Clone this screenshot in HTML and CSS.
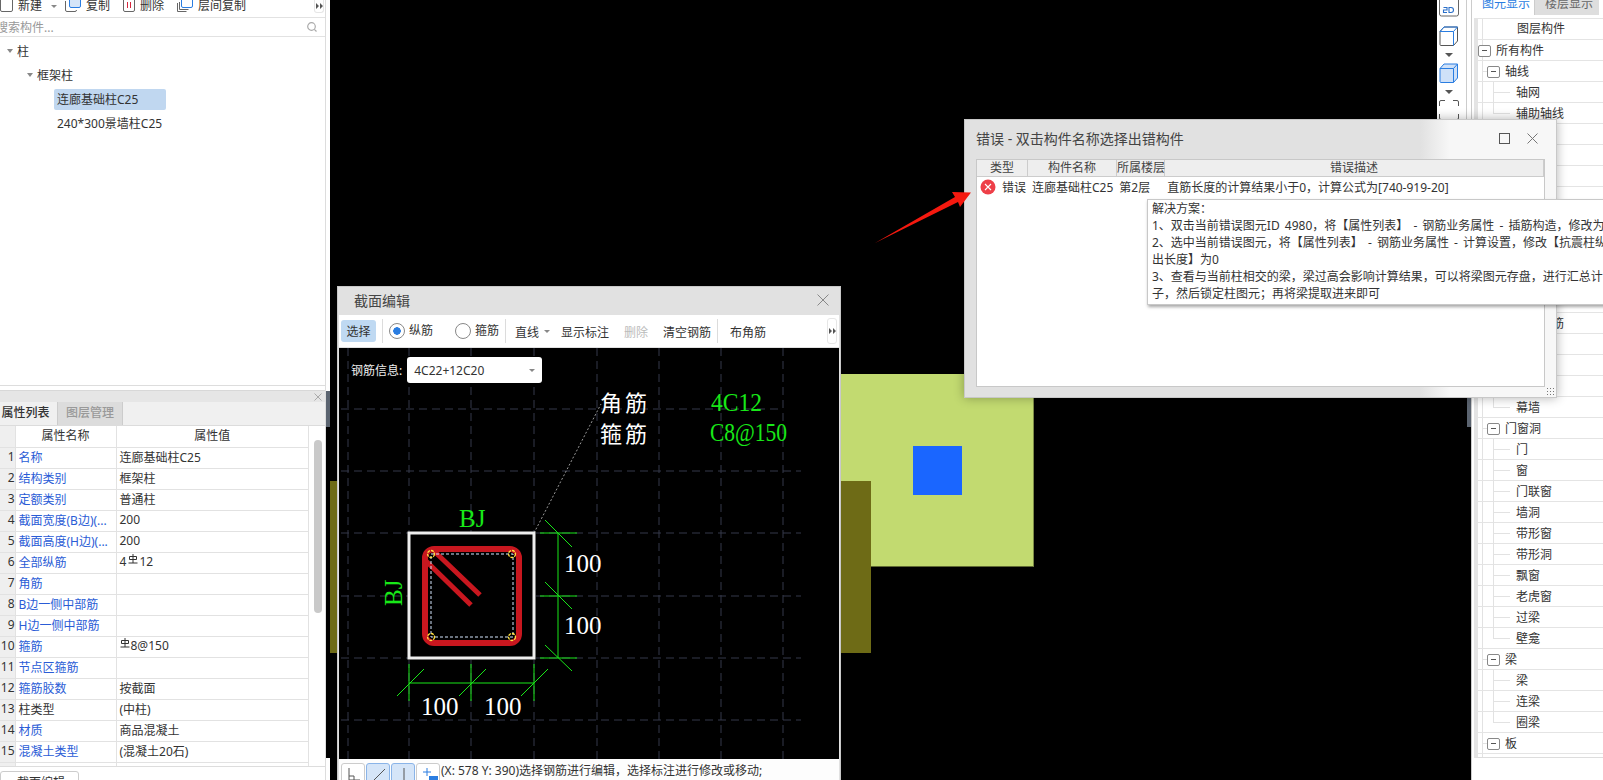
FILE: index.html
```html
<!DOCTYPE html>
<html lang="zh-CN">
<head>
  <meta charset="UTF-8" />
  <title>截面编辑</title>
  <link rel="stylesheet" href="styles.css">
</head>
<body>
  <div class="left-panel">
    <div class="left-content">
      <div class="top-toolbar">
        <span class="tool-item"><svg class="tool-icon" width="13" height="12" viewBox="0 0 13 12"><path d="M.5 0v10a1.5 1.5 0 0 0 1.5 1.5h9a1.5 1.5 0 0 0 1.5-1.5V0" fill="none" stroke="#666"/></svg>新建<i class="caret-small"></i></span>
        <span class="tool-item"><svg class="tool-icon" width="16" height="12" viewBox="0 0 16 12"><path d="M.5 1v9a1.5 1.5 0 0 0 1.5 1.5h8a1.5 1.5 0 0 0 1.5-1.5" fill="none" stroke="#666"/><path d="M4.5 0v6a1.5 1.5 0 0 0 1.5 1.5h8A1.5 1.5 0 0 0 15.500 6V0" fill="#d5e5f8" stroke="#2a7de1"/></svg>复制</span>
        <span class="tool-item"><svg class="tool-icon" width="12" height="12" viewBox="0 0 12 12"><path d="M.5 0v10a1.5 1.5 0 0 0 1.500 1.500h8a1.500 1.500 0 0 0 1.500-1.500V0" fill="none" stroke="#666"/><path d="M4.500 2v6M7.500 2v6" stroke="#d7263d"/></svg>删除</span>
        <span class="tool-item"><svg class="tool-icon" width="16" height="12" viewBox="0 0 16 12"><path d="M.5 3v8.500h9M2.500 2v7.500h9" fill="none" stroke="#666"/><path d="M4.500 0v6a1.500 1.500 0 0 0 1.500 1.500h8a1.500 1.500 0 0 0 1.500-1.500V0" fill="#fff" stroke="#2a7de1"/></svg>层间复制</span>
        <span class="more-btn"><svg width="7" height="6" viewBox="0 0 7 6"><path d="M0 0l3 3-3 3zM4 0l3 3-3 3z" fill="#555"/></svg></span>
      </div>
      <div class="search-row">
        <span class="search-text">搜索构件...</span>
        <svg width="10" height="10" viewBox="0 0 10 10"><circle cx="4.500" cy="4.500" r="3.800" fill="none" stroke="#aaa" stroke-width="1.200"/><path d="M7.300 7.300L9.500 9.500" stroke="#aaa" stroke-width="1.200"/></svg>
      </div>
      <div class="tree">
        <div class="tree-row"><i class="caret-tree"></i>柱</div>
        <div class="tree-row tree-group"><i class="caret-tree"></i>框架柱</div>
        <div class="tree-row tree-leaf"><span class="tree-label tree-selected">连廊基础柱C25</span></div>
        <div class="tree-row tree-leaf"><span class="tree-label">240*300景墙柱C25</span></div>
      </div>
      <div class="prop-panel">
        <div class="prop-titlebar"><svg width="8" height="8" viewBox="0 0 8 8"><path d="M.5.5l7 7M7.500.5l-7 7" stroke="#aaa"/></svg></div>
        <div class="prop-tabs">
          <span class="prop-tab prop-tab-active">属性列表</span>
          <span class="prop-tab">图层管理</span>
        </div>
        <div class="prop-body">
          <table class="prop-table">
            <tr><th class="col-num"></th><th class="col-name">属性名称</th><th>属性值</th></tr>
            <tr><td class="col-num">1</td><td class="blue">名称</td><td>连廊基础柱C25</td></tr>
            <tr><td class="col-num">2</td><td class="blue">结构类别</td><td>框架柱</td></tr>
            <tr><td class="col-num">3</td><td class="blue">定额类别</td><td>普通柱</td></tr>
            <tr><td class="col-num">4</td><td class="blue">截面宽度(B边)(...</td><td>200</td></tr>
            <tr><td class="col-num">5</td><td class="blue">截面高度(H边)(...</td><td>200</td></tr>
            <tr><td class="col-num">6</td><td class="blue">全部纵筋</td><td>4<svg class="steel" width="10" height="10" viewBox="0 0 10 10"><path d="M5 0v9M1.500 2.500h7v3h-7zM.5 9h9" fill="none" stroke="#333"/></svg>12</td></tr>
            <tr><td class="col-num">7</td><td class="blue">角筋</td><td></td></tr>
            <tr><td class="col-num">8</td><td class="blue">B边一侧中部筋</td><td></td></tr>
            <tr><td class="col-num">9</td><td class="blue">H边一侧中部筋</td><td></td></tr>
            <tr><td class="col-num">10</td><td class="blue">箍筋</td><td><svg class="steel steel-first" width="10" height="10" viewBox="0 0 10 10"><path d="M5 0v9M1.500 2.500h7v3h-7zM.5 9h9" fill="none" stroke="#333"/></svg>8@150</td></tr>
            <tr><td class="col-num">11</td><td class="blue">节点区箍筋</td><td></td></tr>
            <tr><td class="col-num">12</td><td class="blue">箍筋胶数</td><td>按截面</td></tr>
            <tr><td class="col-num">13</td><td>柱类型</td><td>(中柱)</td></tr>
            <tr><td class="col-num">14</td><td class="blue">材质</td><td>商品混凝土</td></tr>
            <tr><td class="col-num">15</td><td class="blue">混凝土类型</td><td>(混凝土20石)</td></tr>
            <tr class="row-cut"><td class="col-num"></td><td></td><td></td></tr>
          </table>
          <div class="prop-scroll"><div class="prop-thumb"></div></div>
        </div>
        <div class="prop-footer"><span class="footer-btn">截面编辑</span></div>
      </div>
    </div>
    <div class="left-splitter"></div>
  </div>

  <div class="stage">
    <div class="shape-green"></div>
    <div class="shape-blue"></div>
    <div class="shape-olive"></div>
    <div class="right-splitter"></div>

    <div class="icon-rail">
      <svg class="rail-icon" width="20" height="17" viewBox="0 0 20 17"><path d="M.5 0v14a2 2 0 0 0 2 2h15a2 2 0 0 0 2-2V0" fill="none" stroke="#666"/><path d="M4.500 7.500h3.500v2.500h-3.500v2.500h3.500M10 7.500v5h2a2.500 2.500 0 0 0 0-5z" fill="none" stroke="#2a6fc9" stroke-width="1.100"/></svg>
      <svg class="rail-cube" width="20" height="20" viewBox="0 0 20 20"><path d="M1 5.500L5 1h13.500v14l-4 4.500H2a1 1 0 0 1-1-1z" fill="#fff" stroke="#555"/><path d="M1 5.500h13.500V19.500M14.500 5.500L18.500 1" fill="none" stroke="#2a7de1"/><path d="M1 5.500L5 1h13.500" fill="none" stroke="#2a7de1"/></svg>
      <i class="rail-caret"></i>
      <svg class="rail-cube" width="20" height="20" viewBox="0 0 20 20"><path d="M1 5.500L5 1h13.500v14l-4 4.500H2a1 1 0 0 1-1-1z" fill="#cfe1f8" stroke="#2a7de1"/><path d="M1 5.500h13.500V19.500M14.500 5.500L18.500 1" fill="none" stroke="#2a7de1"/></svg>
      <i class="rail-caret"></i>
      <svg class="rail-cube" width="20" height="20" viewBox="0 0 20 20"><path d="M.5 6V2A1.500 1.500 0 0 1 2 .5h4M14 .5h4A1.500 1.500 0 0 1 19.500 2v4M.5 14v4A1.500 1.500 0 0 0 2 19.500h4M14 19.500h4a1.500 1.500 0 0 0 1.500-1.500v-4" fill="none" stroke="#555"/></svg>
    </div>

    <svg class="red-arrow" width="110" height="60" viewBox="870 188 110 60"><polygon points="875,243 955,197 952,192 971,192.500 960,207 958,202" fill="#f5190f"/></svg>

    <!-- 截面编辑 window -->
    <div class="section-window">
      <div class="section-title">
        <span>截面编辑</span>
        <svg width="12" height="12" viewBox="0 0 12 12"><path d="M.5.5l11 11M11.500.5l-11 11" stroke="#888"/></svg>
      </div>
      <div class="section-toolbar">
        <span class="sec-btn sec-btn-on">选择</span>
        <i class="sec-sep"></i>
        <span class="sec-radio sec-radio-on">纵筋</span>
        <span class="sec-radio sec-radio-gap">箍筋</span>
        <i class="sec-sep"></i>
        <span class="sec-line">直线<i class="caret-small"></i></span>
        <span class="sec-text">显示标注</span>
        <span class="sec-text sec-disabled">删除</span>
        <span class="sec-text">清空钢筋</span>
        <i class="sec-sep"></i>
        <span class="sec-text sec-last">布角筋</span>
        <span class="more-btn sec-more"><svg width="7" height="6" viewBox="0 0 7 6"><path d="M0 0l3 3-3 3zM4 0l3 3-3 3z" fill="#555"/></svg></span>
      </div>
      <div class="section-canvas">
        <svg class="section-drawing" width="501" height="411" viewBox="338 347 501 411">
          <g stroke="#34384a" stroke-dasharray="8 5" fill="none">
            <path d="M347 347V758M408 347V758M470 347V758M533 347V758M596 347V758M658 347V758M720 347V758M782 347V758"/>
            <path d="M340 408H782M340 470H800M340 532H800M340 595H800M340 657H800M340 719H800"/>
          </g>
          <path d="M533 532L600 403" stroke="#999" stroke-dasharray="2 2"/>
          <rect x="408" y="532" width="125" height="125" fill="#000" stroke="#eee" stroke-width="3"/>
          <rect x="424" y="548" width="94" height="94" rx="9" fill="none" stroke="#c8171f" stroke-width="6"/>
          <path d="M433 550L479 594M425 560L470 604" stroke="#c8171f" stroke-width="5"/>
          <rect x="430" y="553" width="82" height="83" fill="none" stroke="#d4e6ff" stroke-dasharray="3 2"/>
          <g fill="none" stroke="#ffe040" stroke-width="1.300" stroke-dasharray="3 1">
            <circle cx="430" cy="553" r="3.500"/><circle cx="511" cy="553" r="3.500"/><circle cx="430" cy="636" r="3.500"/><circle cx="511" cy="636" r="3.500"/>
          </g>
          <g stroke="#18e818" fill="none">
            <path d="M557 532V657M539 532H576M539 595H576M539 657H576M544 519L571 546M544 581L571 608M544 644L571 670"/>
            <path d="M408 682H533M408 663V700M470 663V700M533 663V700M396 695L423 668M458 695L485 668M520 695L547 668"/>
          </g>
          <g class="cad-num">
            <text x="563" y="571">100</text>
            <text x="563" y="633">100</text>
            <text x="420" y="714">100</text>
            <text x="483" y="714">100</text>
          </g>
          <g class="cad-green">
            <text x="458" y="526">BJ</text>
            <text transform="translate(401 605) rotate(-90)">BJ</text>
            <text x="710" y="410" textLength="51" lengthAdjust="spacingAndGlyphs">4C12</text>
            <text x="709" y="440" textLength="77" lengthAdjust="spacingAndGlyphs">C8@150</text>
          </g>
          <g class="cad-label">
            <text x="599" y="410">角筋</text>
            <text x="599" y="441">箍筋</text>
          </g>
        </svg>
        <div class="rebar-info">
          <span>钢筋信息:</span>
          <span class="rebar-select">4C22+12C20<i class="caret-small"></i></span>
        </div>
      </div>
      <div class="section-status">
        <span class="status-btn"><svg width="14" height="14" viewBox="0 0 14 14"><path d="M2 1v13M2 9h5v5M2 13h11" fill="none" stroke="#555"/></svg></span>
        <span class="status-btn status-btn-on"><svg width="14" height="14" viewBox="0 0 14 14"><path d="M1 14L13 2" stroke="#555"/></svg></span>
        <span class="status-btn status-btn-on"><svg width="14" height="14" viewBox="0 0 14 14"><path d="M7 1v13" stroke="#555"/></svg></span>
        <span class="status-btn"><svg width="16" height="15" viewBox="0 0 16 15"><path d="M5 1v8M1 5h8" stroke="#2a7de1"/><rect x="7" y="9" width="9" height="6" fill="#2a7de1"/></svg></span>
        <span class="status-text">(X: 578 Y: 390)选择钢筋进行编辑，选择标注进行修改或移动;</span>
      </div>
    </div>

    <!-- 错误 window -->
    <div class="error-window">
      <div class="error-title">
        <span>错误 - 双击构件名称选择出错构件</span>
        <svg class="win-max" width="11" height="11" viewBox="0 0 11 11"><rect x=".5" y=".5" width="10" height="10" fill="none" stroke="#555"/></svg>
        <svg class="win-close" width="11" height="11" viewBox="0 0 11 11"><path d="M.5.5l10 10M10.500.5l-10 10" stroke="#777"/></svg>
      </div>
      <div class="error-table">
        <div class="error-head">
          <span class="e-type">类型</span><span class="e-name">构件名称</span><span class="e-floor">所属楼层</span><span class="e-desc">错误描述</span>
        </div>
        <div class="error-row">
          <svg class="error-icon" width="16" height="16" viewBox="0 0 16 16"><circle cx="8" cy="8" r="7.500" fill="#ee3f48"/><path d="M5 5l6 6M11 5l-6 6" stroke="#fff" stroke-width="1.100"/></svg>
          <span class="er-type">错误</span><span class="er-name">连廊基础柱C25</span><span class="er-floor">第2层</span><span class="er-desc">直筋长度的计算结果小于0，计算公式为[740-919-20]</span>
        </div>
      </div>
      <div class="resize-grip"></div>
      <div class="error-tip">
        <div>解决方案：</div>
        <div>1、双击当前错误图元ID 4980，将【属性列表】 - 钢筋业务属性 - 插筋构造，修改为</div>
        <div>2、选中当前错误图元，将【属性列表】 - 钢筋业务属性 - 计算设置，修改【抗震柱纵</div>
        <div>出长度】为0</div>
        <div>3、查看与当前柱相交的梁，梁过高会影响计算结果，可以将梁图元存盘，进行汇总计</div>
        <div>子，然后锁定柱图元；再将梁提取进来即可</div>
      </div>
    </div>
  </div>

  <div class="right-panel">
    <div class="layer-tabs">
      <span class="layer-tab layer-tab-active">图元显示</span>
      <span class="layer-tab">楼层显示</span>
    </div>
    <div class="layer-table">
      <div class="layer-head">图层构件</div>
      <div class="layer-row lv0"><i class="box"></i>所有构件</div>
      <div class="layer-row lv1"><i class="box"></i>轴线</div>
      <div class="layer-row lv2">轴网</div>
      <div class="layer-row lv2 last">辅助轴线</div>
      <div class="layer-row"></div>
      <div class="layer-row"></div>
      <div class="layer-row"></div>
      <div class="layer-row"></div>
      <div class="layer-row"></div>
      <div class="layer-row"></div>
      <div class="layer-row"></div>
      <div class="layer-row"></div>
      <div class="layer-row"></div>
      <div class="layer-row lv2">砌体加筋</div>
      <div class="layer-row"></div>
      <div class="layer-row"></div>
      <div class="layer-row"></div>
      <div class="layer-row lv2 last">幕墙</div>
      <div class="layer-row lv1"><i class="box"></i>门窗洞</div>
      <div class="layer-row lv2">门</div>
      <div class="layer-row lv2">窗</div>
      <div class="layer-row lv2">门联窗</div>
      <div class="layer-row lv2">墙洞</div>
      <div class="layer-row lv2">带形窗</div>
      <div class="layer-row lv2">带形洞</div>
      <div class="layer-row lv2">飘窗</div>
      <div class="layer-row lv2">老虎窗</div>
      <div class="layer-row lv2">过梁</div>
      <div class="layer-row lv2 last">壁龛</div>
      <div class="layer-row lv1"><i class="box"></i>梁</div>
      <div class="layer-row lv2">梁</div>
      <div class="layer-row lv2">连梁</div>
      <div class="layer-row lv2 last">圈梁</div>
      <div class="layer-row lv1"><i class="box"></i>板</div>
      <div class="layer-row layer-cut"></div>
    </div>
  </div>
</body>
</html>
```

FILE: styles.css
```css
* {
  box-sizing: border-box;
}

html, body {
  height: 780px;
}

body {
  margin: 0;
  display: flex;
  overflow: hidden;
  background: #000;
  color: #333;
  font-family: "Noto Sans", "Noto Sans CJK SC", sans-serif;
  font-size: 12px;
}

svg {
  display: block;
  flex: none;
}

i {
  display: block;
  flex: none;
}

.caret-small {
  width: 0;
  height: 0;
  border-left: 3px solid transparent;
  border-right: 3px solid transparent;
  border-top: 3px solid #888;
}

/* Left panel */
.left-panel {
  width: 330px;
  flex: none;
  display: flex;
  position: relative;
  z-index: 1;
}

.left-content {
  width: 326px;
  height: 780px;
  background: #fff;
  border-right: 1px solid #ddd;
  display: flex;
  flex-direction: column;
}

.left-splitter {
  width: 4px;
  background: linear-gradient(#fff 391px, #5b6470 391px, #5b6470 427px, #000 427px, #000 758px, #fff 758px);
}

.top-toolbar {
  height: 18px;
  flex: none;
  display: flex;
  align-items: flex-start;
  border-bottom: 1px solid #e2e2e2;
  overflow: hidden;
  position: relative;
}

.tool-item {
  display: flex;
  align-items: center;
  height: 12px;
  line-height: 12px;
}

.tool-item:nth-child(1) {
  margin-left: 0;
  width: 65px;
}

.tool-item:nth-child(2) {
  width: 58px;
}

.tool-item:nth-child(3) {
  width: 54px;
}

.tool-icon {
  margin-right: 5px;
}

.tool-item .caret-small {
  margin-left: 9px;
}

.more-btn {
  display: flex;
  align-items: center;
  justify-content: center;
  width: 10px;
  height: 13px;
  border: 1px solid #e6e6e6;
  border-top: none;
  border-radius: 0 0 3px 3px;
  position: absolute;
  left: 314px;
  top: 0;
}

.search-row {
  height: 19px;
  flex: none;
  display: flex;
  align-items: center;
  justify-content: space-between;
  padding-right: 8px;
  border-bottom: 1px solid #e2e2e2;
  color: #999;
  overflow: hidden;
}

.search-text {
  margin-left: -4px;
}

.tree {
  height: 349px;
  flex: none;
  padding-top: 2px;
  border-bottom: 1px solid #ddd;
}

.tree-row {
  height: 24px;
  display: flex;
  align-items: center;
  padding-left: 7px;
}

.caret-tree {
  width: 0;
  height: 0;
  margin-right: 4px;
  border-left: 3.500px solid transparent;
  border-right: 3.500px solid transparent;
  border-top: 4px solid #888;
}

.tree-group {
  padding-left: 27px;
}

.tree-leaf {
  padding-left: 54px;
}

.tree-label {
  display: block;
  width: 112px;
  height: 21px;
  line-height: 21px;
  padding-left: 3px;
  white-space: nowrap;
  border-radius: 2px;
}

.tree-selected {
  background: #c0d7f0;
}

.prop-panel {
  margin-top: 4px;
  flex: 1;
  min-height: 0;
  border-top: 1px solid #d8d8d8;
  display: flex;
  flex-direction: column;
}

.prop-titlebar {
  height: 11px;
  flex: none;
  background: #e6e6e6;
  display: flex;
  align-items: center;
  justify-content: flex-end;
  padding-right: 3px;
}

.prop-tabs {
  height: 24px;
  flex: none;
  display: flex;
  background: #f0f0f0;
  border-bottom: 1px solid #dcdcdc;
}

.prop-tab {
  width: 65px;
  line-height: 22px;
  text-align: center;
  color: #999;
  background: #dcdcdc;
  font-weight: 500;
  border-right: 1px solid #ccc;
}

.prop-tab-active {
  width: 58px;
  padding-right: 6px;
  color: #333;
  background: #f0f0f0;
  border-right: 1px solid #ccc;
}

.prop-body {
  height: 341px;
  flex: none;
  display: flex;
  border-bottom: 1px solid #ddd;
  overflow: hidden;
}

.prop-table {
  width: 309px;
  flex: none;
  border-collapse: collapse;
  table-layout: fixed;
  align-self: flex-start;
}

.prop-table tr {
  height: 21px;
}

.prop-table th {
  font-weight: 400;
  height: 21px;
  padding: 0 0 2px;
  background: #fff;
  border: 1px solid #e2e2e2;
  border-top: none;
}

.prop-table td {
  height: 21px;
  padding: 0 0 2px 3px;
  border: 1px solid #e2e2e2;
  white-space: nowrap;
  overflow: hidden;
}

.prop-table .col-num {
  width: 15px;
  padding: 0 0 2px;
  background: #efefef;
  border-left: none;
  text-align: right;
  font-size: 12px;
}

.prop-table .col-name {
  width: 101px;
}

.prop-table .blue {
  color: #2a5cd6;
}

.row-cut td {
  height: 6px;
}

.steel {
  display: inline-block;
  margin: 0 1px 0 2px;
  vertical-align: 2px;
}

.steel-first {
  margin-left: 0;
}

.prop-scroll {
  flex: 1;
  padding: 14px 0 0 5px;
}

.prop-thumb {
  width: 8px;
  height: 173px;
  background: #c9c9c9;
  border-radius: 4px;
}

.prop-footer {
  flex: 1;
  padding-top: 4px;
}

.footer-btn {
  display: block;
  width: 79px;
  height: 24px;
  padding-left: 16px;
  line-height: 22px;
  border: 1px solid #ccc;
  border-radius: 3px;
}

/* Canvas */
.stage {
  width: 1141px;
  flex: none;
  height: 780px;
  position: relative;
  z-index: 2;
  background: #000;
}

.shape-green {
  position: absolute;
  left: 511px;
  top: 374px;
  width: 193px;
  height: 193px;
  background: #c2da70;
  border-right: 1px solid #7c8a46;
  border-bottom: 1px solid #5f6a33;
}

.shape-blue {
  position: absolute;
  left: 583px;
  top: 446px;
  width: 49px;
  height: 49px;
  background: #1a66ff;
}

.shape-olive {
  position: absolute;
  left: 0;
  top: 481px;
  width: 541px;
  height: 172px;
  background: #6e6b16;
}

.right-splitter {
  position: absolute;
  left: 1137px;
  top: 0;
  width: 4px;
  height: 427px;
  background: linear-gradient(#fff 130px, #5b6470 130px);
}

.icon-rail {
  position: absolute;
  left: 1107px;
  top: 0;
  width: 30px;
  height: 200px;
  background: #fff;
  border-right: 1px solid #ccc;
  display: flex;
  flex-direction: column;
  align-items: center;
  padding-right: 5px;
}

.rail-icon {
  margin-bottom: 9px;
}

.rail-caret {
  margin: 7px 0 6px;
  width: 0;
  height: 0;
  border-left: 4px solid transparent;
  border-right: 4px solid transparent;
  border-top: 4px solid #555;
}

.red-arrow {
  position: absolute;
  left: 540px;
  top: 188px;
  z-index: 4;
}

/* Section window */
.section-window {
  position: absolute;
  left: 7px;
  top: 286px;
  width: 504px;
  height: 494px;
  background: #e1e1e1;
  border: 1px solid #c8c8c8;
  border-bottom: none;
  display: flex;
  flex-direction: column;
  z-index: 3;
}

.section-title {
  height: 27px;
  flex: none;
  display: flex;
  align-items: center;
  justify-content: space-between;
  padding: 0 11px 1px 16px;
  font-size: 14px;
  color: #444;
}

.section-toolbar {
  height: 32px;
  flex: none;
  margin: 1px 1px 0 1px;
  display: flex;
  align-items: center;
  background: #fff;
  position: relative;
  padding-left: 2px;
}

.sec-btn {
  width: 35px;
  height: 22px;
  line-height: 23px;
  text-align: center;
  border-radius: 3px;
}

.sec-btn-on {
  background: #bfd9f2;
}

.sec-sep {
  width: 1px;
  height: 24px;
  margin: 0 6px;
  background: #dcdcdc;
}

.sec-radio {
  display: flex;
  align-items: center;
  line-height: 16px;
}

.sec-radio::before {
  content: "";
  width: 14px;
  height: 14px;
  margin-right: 4px;
  border: 1px solid #888;
  border-radius: 50%;
  background: #fff;
}

.sec-radio-on::before {
  background: radial-gradient(circle, #2a7de1 3.500px, #fff 4px);
}

.sec-radio-gap {
  margin-left: 22px;
}

.sec-line {
  display: flex;
  align-items: center;
  gap: 5px;
  width: 46px;
  margin-left: 0;
  padding: 1px 0 0 3px;
}

.sec-text {
  margin-left: 15px;
  padding-top: 3px;
  line-height: 16px;
}

.sec-line + .sec-text {
  margin-left: 3px;
}

.sec-disabled {
  color: #bbb;
}

.sec-sep + .sec-text {
  margin-left: 6px;
}

.sec-more {
  left: 488px;
  top: 3px;
  height: 26px;
  border-top: 1px solid #e6e6e6;
  border-radius: 3px;
}

.section-canvas {
  flex: 1;
  min-height: 0;
  margin: 1px 1px 0 1px;
  background: #000;
  position: relative;
  overflow: hidden;
}

.section-drawing {
  position: absolute;
  left: 0;
  top: 0;
}

.cad-num text {
  font-family: "Liberation Serif", serif;
  font-size: 25px;
  fill: #fff;
}

.cad-green text {
  font-family: "Liberation Serif", serif;
  font-size: 25px;
  fill: #18e818;
}

.cad-label text {
  font-family: "Noto Sans CJK SC", sans-serif;
  font-size: 22px;
  letter-spacing: 3px;
  fill: #fff;
}

.rebar-info {
  position: absolute;
  left: 12px;
  top: 9px;
  display: flex;
  align-items: center;
  color: #eee;
  gap: 5px;
}

.rebar-select {
  width: 135px;
  height: 26px;
  padding: 0 7px;
  display: flex;
  align-items: center;
  justify-content: space-between;
  background: #fff;
  color: #333;
  border-radius: 3px;
}

.section-status {
  height: 21px;
  flex: none;
  display: flex;
  align-items: flex-start;
  background: #fdfdfd;
  padding: 4px 0 0 2px;
  gap: 1px;
  margin: 0 1px;
  overflow: hidden;
}

.status-btn {
  width: 24px;
  height: 22px;
  padding: 3px 0 0 5px;
  background: #fff;
  border: 1px solid #ccc;
  border-radius: 3px;
}

.status-btn-on {
  background: #d5e5f8;
  border-color: #8ab4e8;
}

.status-text {
  margin-top: -1px;
  line-height: 18px;
  white-space: nowrap;
}

/* Error window */
.error-window {
  position: absolute;
  left: 634px;
  top: 119px;
  width: 593px;
  height: 279px;
  background: linear-gradient(90deg, #e1e1e1 77%, #f7f7f7 82%);
  border: 1px solid #c8c8c8;
  box-shadow: 0 0 10px rgba(0, 0, 0, 0.3);
  z-index: 3;
}

.error-title {
  height: 39px;
  display: flex;
  align-items: center;
  padding: 0 18px 3px 11px;
  font-size: 14px;
  color: #444;
}

.win-max {
  margin-left: auto;
}

.win-close {
  margin-left: 17px;
}

.error-table {
  margin: 0 11px;
  height: 228px;
  background: #fff;
  border: 1px solid #c8c8c8;
}

.error-head {
  height: 17px;
  display: flex;
  line-height: 15px;
  text-align: center;
  background: #eee;
  border-bottom: 1px solid #ccc;
  color: #444;
}

.error-head span {
  border-right: 1px solid #ccc;
  white-space: nowrap;
}

.e-type {
  width: 51px;
}

.e-name {
  width: 89px;
}

.e-floor {
  width: 48px;
}

.e-desc {
  flex: 1;
}

.error-row {
  height: 20px;
  display: flex;
  align-items: center;
  padding-left: 3px;
  white-space: nowrap;
}

.er-type {
  margin-left: 6px;
}

.er-name {
  margin-left: 6px;
}

.er-floor {
  margin-left: 6px;
}

.er-desc {
  margin-left: 17px;
}

.resize-grip {
  position: absolute;
  right: 2px;
  bottom: 2px;
  width: 8px;
  height: 8px;
  background: radial-gradient(circle, #777 1px, transparent 1px) 0 0 / 3px 3px;
}

.error-tip {
  position: absolute;
  left: 182px;
  top: 79px;
  width: 500px;
  height: 106px;
  padding: 0 4px;
  background: #fff;
  border: 1px solid #c8c8c8;
  box-shadow: 1px 2px 3px rgba(0, 0, 0, 0.35);
  line-height: 17px;
  word-spacing: 2px;
  white-space: nowrap;
  overflow: hidden;
  color: #333;
}

/* Right panel */
.right-panel {
  width: 132px;
  flex: none;
  height: 780px;
  background: #fff;
  border-left: 1px solid #ccc;
  padding-left: 2px;
}

.layer-tabs {
  height: 18px;
  display: flex;
  padding-left: 7px;
  overflow: hidden;
}

.layer-tab {
  width: 64px;
  height: 15px;
  padding-left: 10px;
  line-height: 8px;
  background: #dedede;
  color: #666;
  white-space: nowrap;
}

.layer-tab-active {
  width: 54px;
  padding-left: 1px;
  background: #fff;
  color: #2a7de1;
  border-right: 1px solid #ccc;
}

.layer-table {
  height: 740px;
  width: 130px;
  border-left: 4px solid #e4e4e4;
  border-top: 1px solid #e4e4e4;
  border-bottom: 1px solid #ddd;
  overflow: hidden;
  background: linear-gradient(#e2e2e2, #e2e2e2) 4px 0 / 1px 100% no-repeat;
}

.layer-head {
  height: 21px;
  line-height: 20px;
  text-align: center;
  font-size: 12px;
  border-bottom: 1px solid #e4e4e4;
}

.layer-row {
  height: 21px;
  padding-top: 1px;
  line-height: 20px;
  display: flex;
  align-items: center;
  white-space: nowrap;
  border-bottom: 1px solid #e4e4e4;
  position: relative;
}

.box {
  width: 13px;
  height: 12px;
  margin-right: 5px;
  border: 1px solid #888;
  border-radius: 2px;
  background: linear-gradient(#555, #555) center / 5px 1px no-repeat #fff;
  position: relative;
  z-index: 1;
}

.lv0 {
  padding-left: 0;
}

.lv1 {
  padding-left: 9px;
}

.lv1::before {
  content: "";
  position: absolute;
  left: 5px;
  top: 10px;
  width: 5px;
  height: 1px;
  background: #e2e2e2;
}

.lv2 {
  padding-left: 38px;
}

.lv2::before {
  content: "";
  position: absolute;
  left: 15px;
  top: 0;
  width: 1px;
  height: 21px;
  background: #e2e2e2;
}

.lv2::after {
  content: "";
  position: absolute;
  left: 16px;
  top: 10px;
  width: 16px;
  height: 1px;
  background: #e2e2e2;
}

.lv2.last::before {
  height: 11px;
}

.layer-cut {
  height: 15px;
}
```
